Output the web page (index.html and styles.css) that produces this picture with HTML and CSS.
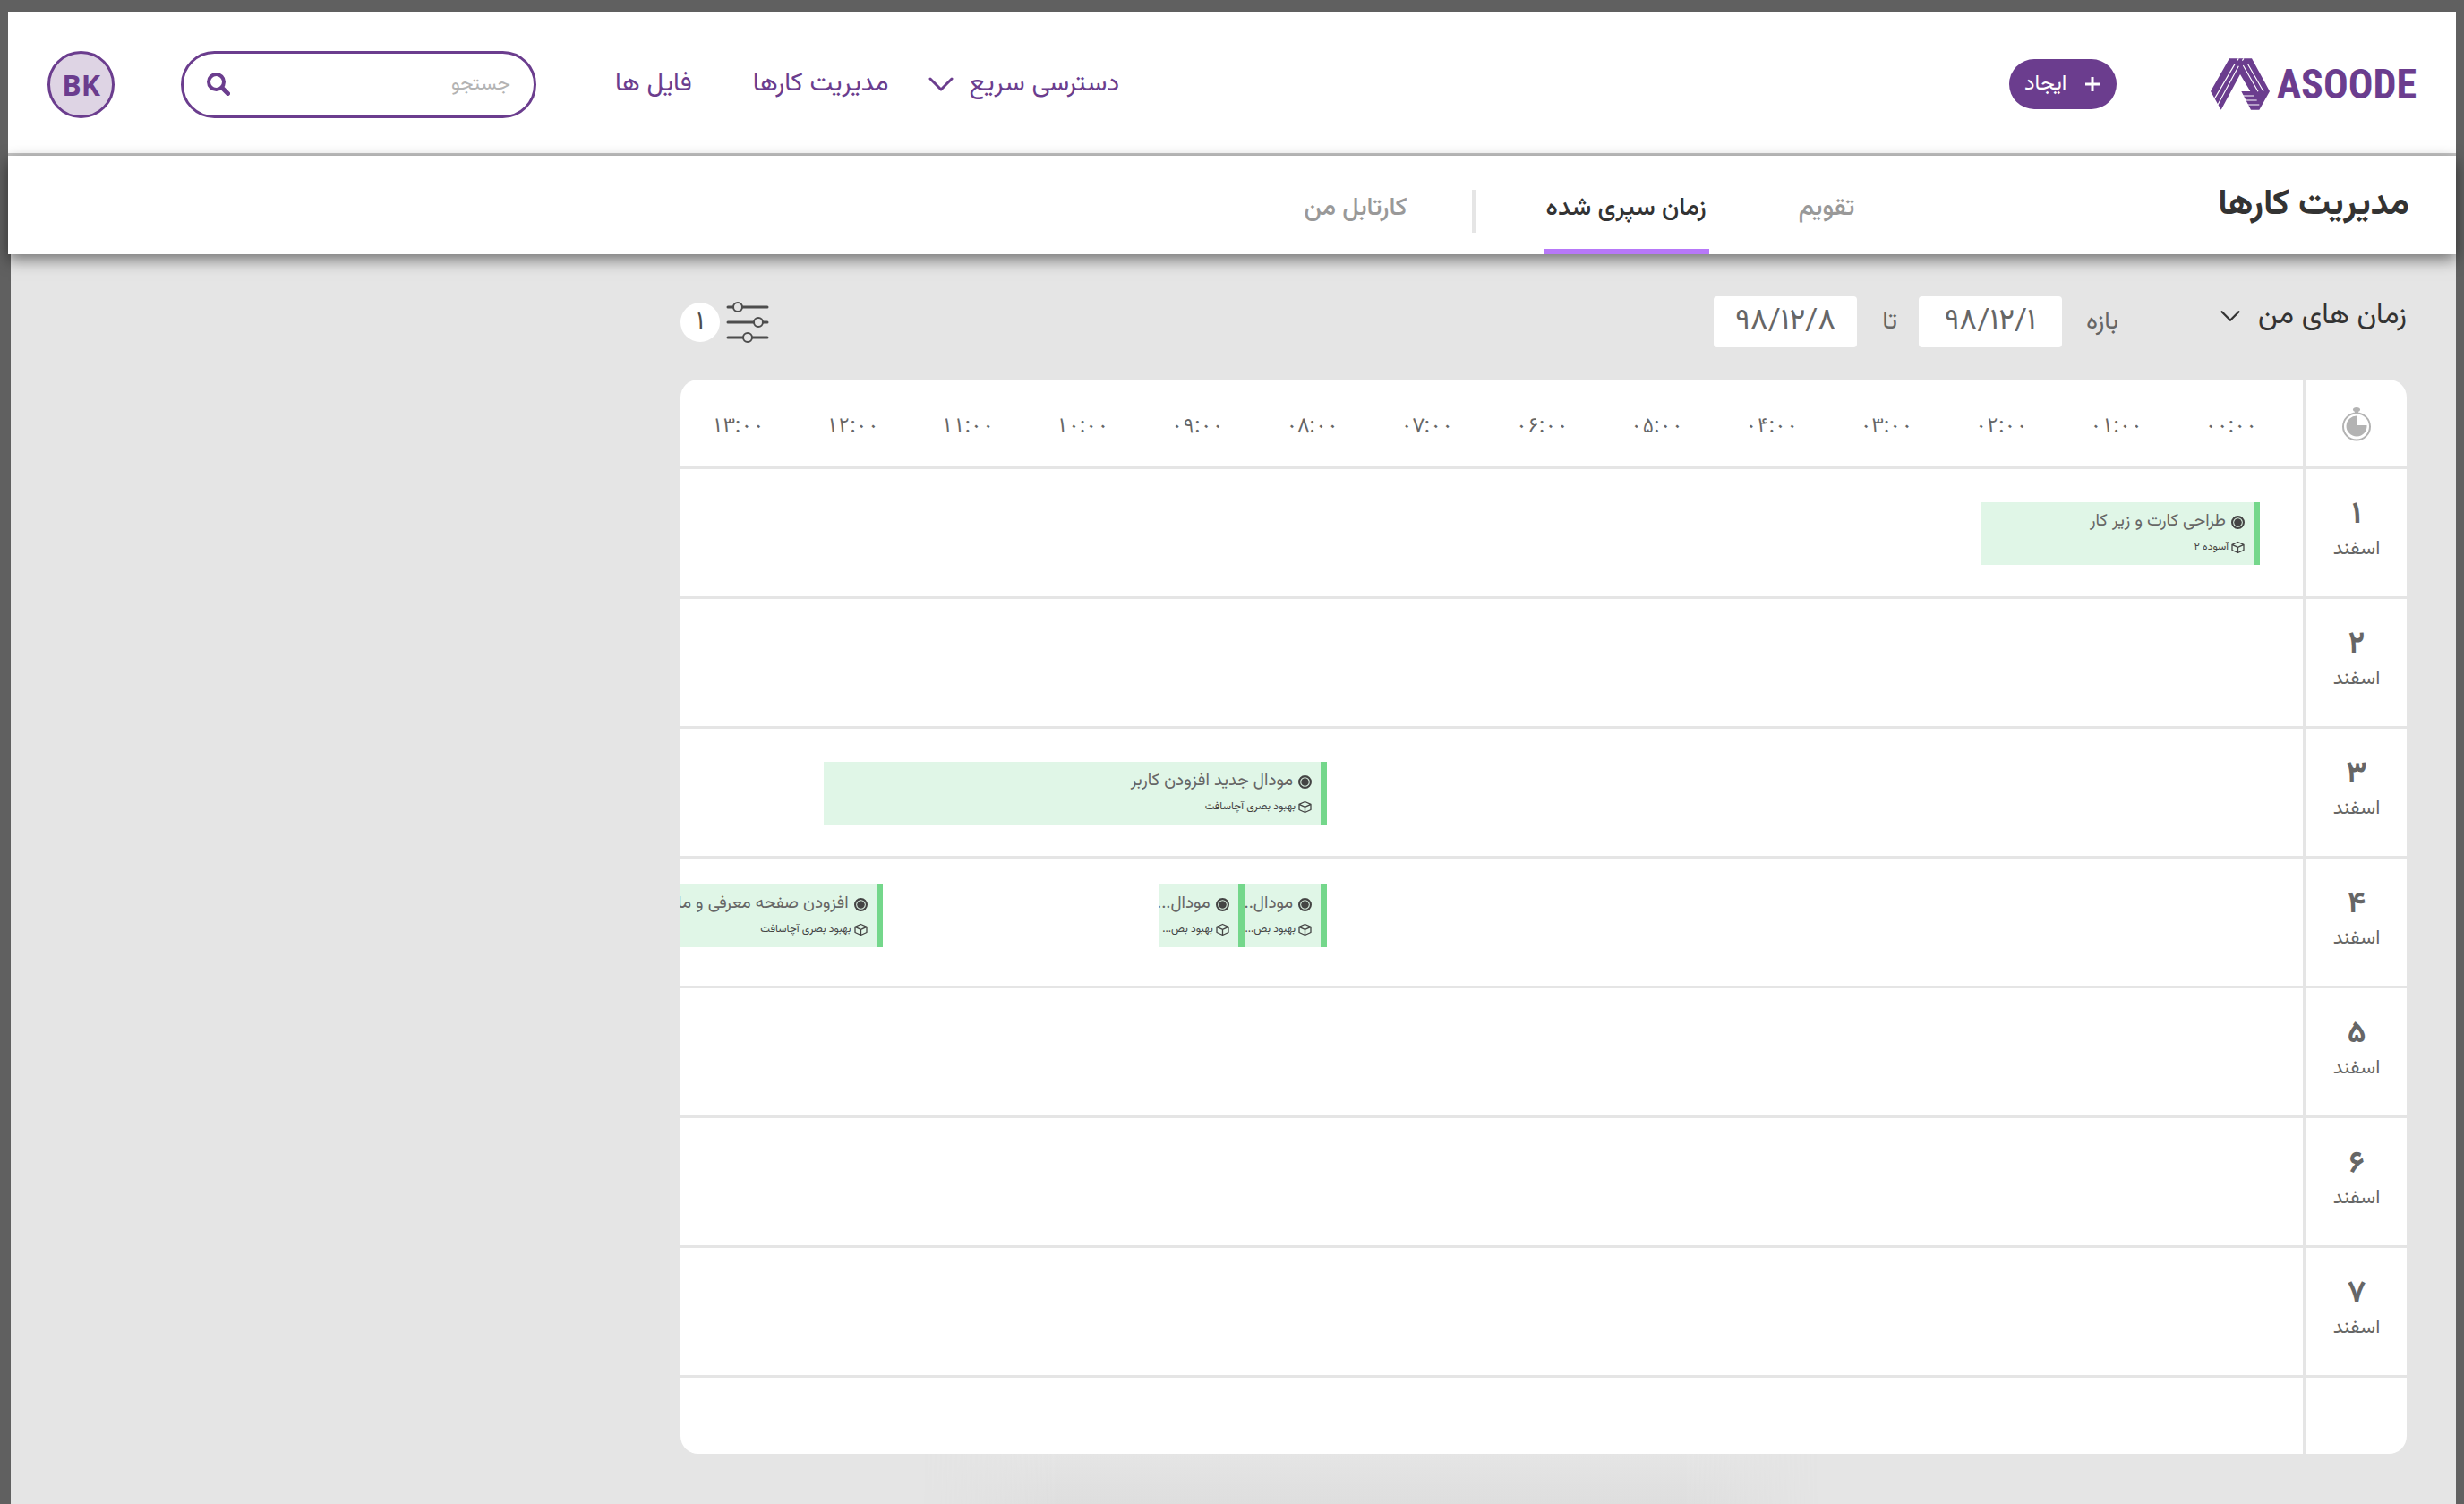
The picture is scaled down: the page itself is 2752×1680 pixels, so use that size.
FILE: index.html
```html
<!DOCTYPE html>
<html lang="fa" dir="rtl">
<head>
<meta charset="utf-8">
<meta name="viewport" content="width=device-width, initial-scale=1">
<title>آسوده - زمان سپری شده</title>
<link rel="stylesheet" href="styles.css">
</head>
<body>
<svg class="sprite" aria-hidden="true">
  <symbol id="task" viewBox="0 0 14 14"><circle cx="7" cy="7" r="6" fill="none" stroke="#444" stroke-width="2"/><circle cx="7" cy="7" r="4" fill="#444"/></symbol>
  <symbol id="cube" viewBox="0 0 15 14"><path d="M7.500 1 L14 3.800 V10 L7.500 13 L1 10 V3.800 Z M1 3.800 L7.500 6.800 L14 3.800 M7.500 6.800 V13" fill="none" stroke="#444" stroke-width="1.300" stroke-linejoin="round"/></symbol>
  <symbol id="chevron" viewBox="0 0 28 16"><path d="M2 2 L14 14 L26 2" fill="none" stroke="currentColor" stroke-width="3" stroke-linecap="round" stroke-linejoin="round"/></symbol>
</svg>

<header class="topbar">
  <a class="logo" href="#" dir="ltr">
    <svg class="logo-mark" viewBox="57 47 198 172" aria-hidden="true">
      <path d="M120 47 H195 L255 157 L220 219 H192 L160 157 H190 L156 100 L92 219 L57 157 Z" fill="#6b3d8e"/>
      <path d="M138 66 L70 182 M151 72 L81 202 M146 54 L151 47 M163 54 L168 47 M166 70 L216 158 M182 66 L234 157 M162 172 H204 M172 187 H212 M180 202 H220" fill="none" stroke="#fff" stroke-width="3.500"/>
    </svg>
    <span class="logo-name">ASOODE</span>
  </a>
  <button class="create" type="button">
    <svg class="plus" viewBox="0 0 18 18" aria-hidden="true"><path d="M9 1 V17 M1 9 H17" stroke="#fff" stroke-width="3"/></svg>
    ایجاد
  </button>
  <nav class="main-nav">
    <button class="nav-item quick" type="button">دسترسی سریع <svg class="chevron" aria-hidden="true"><use href="#chevron"/></svg></button>
    <a class="nav-item tasks" href="#">مدیریت کارها</a>
    <a class="nav-item files" href="#">فایل ها</a>
  </nav>
  <form class="search" role="search">
    <input class="search-input" type="text" placeholder="جستجو" aria-label="جستجو">
    <button class="search-button" type="button" aria-label="جستجو">
      <svg class="search-icon" viewBox="0 0 26 26" aria-hidden="true"><circle cx="10.500" cy="10.500" r="8.500" fill="none" stroke="#6b3d8e" stroke-width="4"/><path d="M17 17 L23.500 23.500" stroke="#6b3d8e" stroke-width="5" stroke-linecap="round"/></svg>
    </button>
  </form>
  <a class="avatar" href="#">BK</a>
</header>

<div class="subbar">
  <h1 class="page-title">مدیریت کارها</h1>
  <nav class="tabs">
    <a class="tab" href="#">تقویم</a>
    <a class="tab active" href="#" aria-current="page">زمان سپری شده</a>
    <span class="divider"></span>
    <a class="tab" href="#">کارتابل من</a>
  </nav>
</div>

<main class="content">
  <form class="filters">
    <button class="scope" type="button">زمان های من <svg class="chevron small" aria-hidden="true"><use href="#chevron"/></svg></button>
    <label class="range-label" for="from">بازه</label>
    <input class="date" id="from" type="text" value="۹۸/۱۲/۱">
    <label class="range-label to" for="until">تا</label>
    <input class="date" id="until" type="text" value="۹۸/۱۲/۸">
    <button class="filter-button" type="button" aria-label="فیلترها">
      <svg class="sliders" viewBox="0 0 48 48" aria-hidden="true"><g stroke="#4d4d4d" stroke-width="3" stroke-linecap="round"><path d="M2 7 H46 M2 24 H46 M2 41 H46"/><g fill="#e5e5e5" stroke-width="2"><circle cx="13" cy="7" r="5"/><circle cx="36" cy="24" r="5"/><circle cx="24" cy="41" r="5"/></g></g></svg>
      <span class="count">۱</span>
    </button>
  </form>

  <table class="timesheet">
    <colgroup><col class="day-col"><col class="edge-col"><col span="14"></colgroup>
    <thead>
      <tr>
        <th class="day" scope="col"><svg class="stopwatch" viewBox="0 0 32 38" role="img" aria-label="روز"><g fill="#b3b3b3"><ellipse cx="16" cy="2.500" rx="4" ry="2.500"/><rect x="14" y="3" width="4" height="4"/><path d="M17 10.500 V20 H27.500 A11.500 11.500 0 1 1 17 9.500 Z"/></g><circle cx="16" cy="21.500" r="15" fill="none" stroke="#b3b3b3" stroke-width="2"/></svg></th>
        <td></td>
        <th scope="col">۰۰:۰۰</th><th scope="col">۰۱:۰۰</th><th scope="col">۰۲:۰۰</th><th scope="col">۰۳:۰۰</th><th scope="col">۰۴:۰۰</th><th scope="col">۰۵:۰۰</th><th scope="col">۰۶:۰۰</th><th scope="col">۰۷:۰۰</th><th scope="col">۰۸:۰۰</th><th scope="col">۰۹:۰۰</th><th scope="col">۱۰:۰۰</th><th scope="col">۱۱:۰۰</th><th scope="col">۱۲:۰۰</th><th scope="col">۱۳:۰۰</th>
      </tr>
    </thead>
    <tbody>
      <tr>
        <th class="day" scope="row"><b>۱</b>اسفند</th>
        <td colspan="15"><div class="track">
          <article class="event" style="margin-inline-start:2.65%;width:17.2%"><h2><svg><use href="#task"/></svg>طراحی کارت و زیر کار</h2><p><svg><use href="#cube"/></svg>آسوده ۲</p></article>
        </div></td>
      </tr>
      <tr><th class="day" scope="row"><b>۲</b>اسفند</th><td colspan="15"></td></tr>
      <tr>
        <th class="day" scope="row"><b>۳</b>اسفند</th>
        <td colspan="15"><div class="track">
          <article class="event" style="margin-inline-start:60.15%;width:31%"><h2><svg><use href="#task"/></svg>مودال جدید افزودن کاربر</h2><p><svg><use href="#cube"/></svg>بهبود بصری آچاسافت</p></article>
        </div></td>
      </tr>
      <tr>
        <th class="day" scope="row"><b>۴</b>اسفند</th>
        <td colspan="15"><div class="track raised">
          <article class="event" style="margin-inline-start:60.15%;width:5.1%"><h2><svg><use href="#task"/></svg>مودال..</h2><p><svg><use href="#cube"/></svg>بهبود بص...</p></article>
          <article class="event" style="width:5.2%"><h2><svg><use href="#task"/></svg>مودال...</h2><p><svg><use href="#cube"/></svg>بهبود بص...</p></article>
          <article class="event" style="margin-inline-start:17.1%;width:12.45%"><h2><svg><use href="#task"/></svg>افزودن صفحه معرفی و ما</h2><p><svg><use href="#cube"/></svg>بهبود بصری آچاسافت</p></article>
        </div></td>
      </tr>
      <tr><th class="day" scope="row"><b>۵</b>اسفند</th><td colspan="15"></td></tr>
      <tr><th class="day" scope="row"><b>۶</b>اسفند</th><td colspan="15"></td></tr>
      <tr><th class="day" scope="row"><b>۷</b>اسفند</th><td colspan="15"></td></tr>
      <tr class="rest"><td class="day"></td><td colspan="15"></td></tr>
    </tbody>
  </table>
</main>
</body>
</html>
```
FILE: styles.css
```css
* {
  box-sizing: border-box;
}

:root {
  --purple: #6b3d8e;
  --line: #e5e5e5;
  --ink: #333;
  --text: #666;
}

body {
  margin: 0;
  min-height: 100vh;
  padding: 13px 9px 0;
  display: flex;
  flex-direction: column;
  background: #606060;
  color: var(--text);
  font-family: Vazirmatn, "Noto Sans Arabic UI", "DejaVu Sans Condensed", sans-serif;
  font-size: 24px;
}

button,
input {
  font: inherit;
  color: inherit;
  border: 0;
  padding: 0;
  background: none;
}

a {
  color: inherit;
  text-decoration: none;
}

.sprite {
  display: none;
}

/* Top bar */
.topbar {
  display: flex;
  align-items: center;
  height: 161px;
  padding: 4px 44px 0;
  background: #fff;
  border-bottom: 3px solid #c6c6c6;
  color: var(--purple);
}

.logo {
  display: flex;
  align-items: center;
  gap: 8px;
}

.logo-mark {
  width: 66px;
  height: 58px;
}

.logo-name {
  font-family: "Roboto Condensed", Roboto, sans-serif;
  font-size: 46px;
  font-weight: 700;
  line-height: 58px;
}

.create {
  display: flex;
  align-items: center;
  justify-content: center;
  gap: 20px;
  width: 120px;
  height: 56px;
  margin-inline-start: 105px;
  border-radius: 28px;
  background: var(--purple);
  color: #fff;
}

.plus {
  width: 18px;
  height: 18px;
}

.main-nav {
  display: flex;
  align-items: center;
  margin-inline-start: auto;
  font-size: 29px;
}

.quick {
  display: flex;
  align-items: center;
  gap: 18px;
}

.chevron {
  width: 28px;
  height: 16px;
}

.tasks {
  margin-inline-start: 44px;
}

.files {
  margin-inline-start: 68px;
}

.search {
  display: flex;
  align-items: center;
  width: 397px;
  height: 75px;
  margin-inline: 88px 74px;
  padding: 0 26px;
  border: 3px solid var(--purple);
  border-radius: 38px;
}

.search-input {
  flex: 1;
  min-width: 0;
  height: 48px;
  font-size: 22px;
}

.search-input::placeholder {
  color: #b3b3b3;
  opacity: 1;
}

.search-icon {
  display: block;
  width: 26px;
  height: 26px;
}

.avatar {
  width: 75px;
  height: 75px;
  border: 3px solid var(--purple);
  border-radius: 50%;
  background: #ded4e4;
  font-family: "Open Sans", sans-serif;
  font-size: 32px;
  font-weight: 700;
  line-height: 69px;
  text-align: center;
}

/* Section bar */
.subbar {
  position: relative;
  display: flex;
  align-items: center;
  height: 110px;
  padding: 0 52px;
  background: #fff;
  box-shadow: 0 6px 16px rgba(0, 0, 0, 0.5);
}

.page-title {
  margin: 0;
  color: var(--ink);
  font-size: 40px;
  line-height: 56px;
}

.tabs {
  display: flex;
  align-items: center;
  align-self: stretch;
  padding-top: 14px;
  margin-inline-start: 406px;
  color: #999;
  font-size: 28px;
  font-weight: 500;
}

.tab {
  line-height: 90px;
  border-bottom: 6px solid transparent;
}

.active {
  margin-inline: 100px 76px;
  padding-inline: 3px;
  border-color: #b778f8;
  color: var(--ink);
}

.divider {
  width: 4px;
  height: 48px;
  margin-inline-end: 72px;
  background: var(--line);
}

/* Content */
.content {
  flex: 1;
  margin-left: 3px;
  padding: 47px 55px 0 748px;
  background: var(--line);
}

.content::after {
  content: "";
  display: block;
  width: 52%;
  height: 56px;
  margin-inline-start: 34%;
  background: linear-gradient(#e5e5e5, #dedede);
  mask-image: linear-gradient(90deg, transparent, #000 15%, #000 85%, transparent);
}

.filters {
  display: flex;
  align-items: center;
  height: 57px;
  margin-bottom: 36px;
  font-size: 28px;
}

.scope {
  display: flex;
  align-items: center;
  gap: 20px;
  padding-bottom: 14px;
  color: var(--ink);
  font-size: 32px;
}

.small {
  width: 22px;
  height: 14px;
}

.range-label {
  margin-inline: 114px 27px;
}

.to {
  margin-inline: 24px 28px;
}

.date {
  width: 160px;
  height: 57px;
  border-radius: 4px;
  background: #fff;
  font-size: 34px;
  text-align: center;
}

.filter-button {
  display: flex;
  align-items: center;
  gap: 7px;
  margin-inline-start: auto;
  color: #4d4d4d;
}

.sliders {
  width: 48px;
  height: 48px;
}

.count {
  width: 44px;
  height: 44px;
  border-radius: 50%;
  background: #fff;
  line-height: 44px;
  text-align: center;
}

/* Timesheet */
.timesheet {
  width: 100%;
  table-layout: fixed;
  border-collapse: separate;
  border-spacing: 0;
  border-radius: 20px;
  overflow: hidden;
  background: #fff;
}

.day-col {
  width: 116px;
}

.edge-col {
  width: 16px;
}

.timesheet th,
.timesheet td {
  height: 145px;
  padding: 0;
  border-bottom: 3px solid var(--line);
  font-weight: 400;
  line-height: 32px;
}

.timesheet thead th,
.timesheet thead td {
  height: 100px;
  padding-top: 6px;
  font-family: "Noto Sans Arabic", Vazirmatn, sans-serif;
  font-size: 23px;
}

.timesheet .day {
  padding: 0 0 2px;
  border-left: 4px solid var(--line);
  font-size: 22px;
}

.timesheet .rest td {
  height: 85px;
  border-bottom: 0;
}

.day b {
  display: block;
  margin-bottom: 4px;
  font-size: 34px;
  line-height: 36px;
}

.stopwatch {
  display: block;
  width: 32px;
  height: 38px;
  margin: 4px auto 0;
}

.track {
  display: flex;
  height: 142px;
  padding-top: 37px;
  overflow: hidden;
}

.raised {
  padding-top: 29px;
}

.event {
  flex: none;
  height: 70px;
  padding: 6px 10px 0 0;
  border-right: 7px solid #74d78b;
  background: #e0f6e7;
  overflow: hidden;
  white-space: nowrap;
}

.event h2,
.event p {
  display: flex;
  align-items: center;
  gap: 6px;
  margin: 0;
  font-size: 19px;
  font-weight: 400;
  line-height: 32px;
}

.event p {
  gap: 3px;
  color: #444;
  font-size: 12px;
  line-height: 25px;
}

.event svg {
  flex: none;
  width: 15px;
  height: 15px;
}
```
